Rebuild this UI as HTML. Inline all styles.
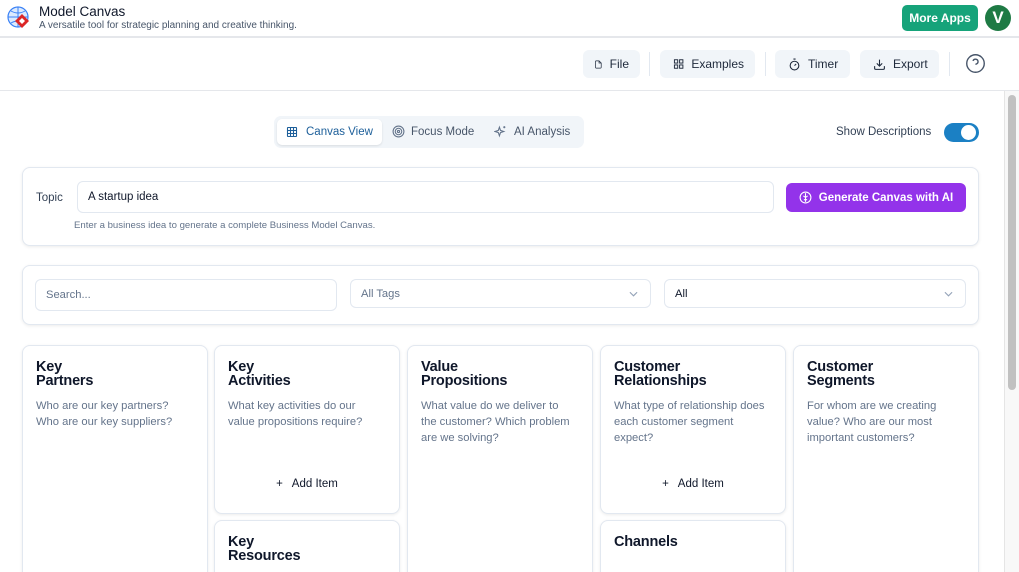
<!DOCTYPE html>
<html style="width:1019px;height:572px;overflow:hidden"><head><meta charset="utf-8"><style>
*{box-sizing:border-box;margin:0;padding:0}
body{width:1019px;height:572px;overflow:hidden;background:#fff;font-family:"Liberation Sans",sans-serif;color:#1e293b;position:relative}
.abs{position:absolute}
.hdr{left:0;top:0;width:1019px;height:38px;border-bottom:2px solid #e5e7eb;background:#fff}
.tb{left:0;top:39px;width:1019px;height:52px;border-bottom:1px solid #e5e7eb}
.btn{position:absolute;top:50px;height:28px;background:#f1f5f9;border-radius:6px;font-size:12px;color:#1e293b;display:flex;align-items:center;gap:7px;padding:0 11px}
.sep{position:absolute;top:52px;width:1px;height:24px;background:#e2e8f0}
.box{position:absolute;border:1px solid #e2e8f0;border-radius:8px;box-shadow:0 1px 3px rgba(0,0,0,.08);background:#fff}
.inp{position:absolute;border:1px solid #e2e8f0;border-radius:6px;background:#fff;font-size:12px;display:flex;align-items:center;padding-left:10px}
.card{position:absolute;width:186px;border:1px solid #e2e8f0;border-radius:8px;box-shadow:0 1px 3px rgba(0,0,0,.08);background:#fff;padding:14px 13px}
.card h3{font-size:14.5px;font-weight:700;line-height:14px;color:#0f172a;letter-spacing:-.2px}
.card p{font-size:11.2px;line-height:16px;color:#64748b;margin-top:10px;padding-right:6px}
.add{position:absolute;left:0;right:0;font-size:11.5px;color:#0f172a;text-align:center}
.t{position:absolute;font-size:11.5px;line-height:14px}
</style></head><body>
<div class="abs hdr"></div>
<svg class="abs" style="left:7px;top:6px" width="24" height="24" viewBox="0 0 24 24"><circle cx="11" cy="11" r="10" fill="#dbeafe" stroke="#3b82f6" stroke-width="1.2"/><path d="M1 11h20M11 1v20M4 5q7 4 14 0M4 17q7-4 14 0" stroke="#3b82f6" stroke-width="1" fill="none"/><path d="M15 8l7 7-7 7-7-7z" fill="#dc2626"/><path d="M15 12l3 3-3 3-3-3z" fill="#fff"/></svg>
<div class="abs" style="left:39px;top:4px;font-size:13.5px;color:#0f172a">Model Canvas</div>
<div class="abs" style="left:39px;top:20px;font-size:10px;color:#475569">A versatile tool for strategic planning and creative thinking.</div>
<div class="abs" style="left:902px;top:5px;width:76px;height:26px;background:#16a37a;border-radius:5px;color:#fff;font-size:12px;font-weight:700;display:flex;align-items:center;justify-content:center">More Apps</div>
<div class="abs" style="left:985px;top:5px;width:26px;height:26px;border-radius:50%;background:#1e7a44;color:#fff;font-weight:700;font-size:17px;display:flex;align-items:center;justify-content:center">V</div>
<div class="abs tb"></div>
<div class="btn" style="left:583px;width:57px"><svg width="13" height="13" viewBox="0 0 24 24" fill="none" stroke="#1e293b" stroke-width="2"><path d="M14 2H6a2 2 0 0 0-2 2v16a2 2 0 0 0 2 2h12a2 2 0 0 0 2-2V8z"/><path d="M14 2v6h6"/></svg>File</div>
<div class="sep" style="left:649px"></div>
<div class="btn" style="left:660px;width:95px;padding-left:13px"><svg width="12" height="12" viewBox="0 0 24 24" fill="none" stroke="#1e293b" stroke-width="2"><rect x="3" y="3" width="7" height="7"/><rect x="14" y="3" width="7" height="7"/><rect x="3" y="14" width="7" height="7"/><rect x="14" y="14" width="7" height="7"/></svg>Examples</div>
<div class="sep" style="left:765px"></div>
<div class="btn" style="left:775px;width:75px;padding-left:13px"><svg width="13" height="13" viewBox="0 0 24 24" fill="none" stroke="#1e293b" stroke-width="2"><circle cx="12" cy="14" r="8"/><path d="M10 2h4M12 14l3-3"/></svg>Timer</div>
<div class="btn" style="left:860px;width:79px;padding-left:13px"><svg width="13" height="13" viewBox="0 0 24 24" fill="none" stroke="#1e293b" stroke-width="2"><path d="M21 15v4a2 2 0 0 1-2 2H5a2 2 0 0 1-2-2v-4M7 10l5 5 5-5M12 15V3"/></svg>Export</div>
<div class="sep" style="left:949px"></div>
<svg class="abs" style="left:965px;top:53px" width="21" height="21" viewBox="0 0 24 24" fill="none" stroke="#475569" stroke-width="1.6"><circle cx="12" cy="12" r="10"/><path d="M9.1 9a3 3 0 0 1 5.8 1c0 2-3 3-3 3M12 17h.01"/></svg>
<div class="abs" style="left:1004px;top:91px;width:15px;height:481px;background:#f8f8f8;border-left:1px solid #e5e5e5"></div>
<div class="abs" style="left:1008px;top:95px;width:8px;height:295px;background:#c1c1c1;border-radius:4px"></div>
<div class="abs" style="left:274px;top:116px;width:310px;height:32px;background:#f1f5f9;border-radius:7px"></div>
<div class="abs" style="left:277px;top:119px;width:105px;height:26px;background:#fff;border-radius:5px;box-shadow:0 1px 2px rgba(0,0,0,.1)"></div>
<svg class="abs" style="left:286px;top:126px" width="12" height="12" viewBox="0 0 24 24" fill="none" stroke="#1d5f9a" stroke-width="2.2"><rect x="3" y="3" width="18" height="18" rx="1"/><path d="M3 9h18M3 15h18M9 3v18M15 3v18"/></svg>
<div class="t" style="left:306px;top:125px;color:#1d5f9a">Canvas View</div>
<svg class="abs" style="left:392px;top:125px" width="13" height="13" viewBox="0 0 24 24" fill="none" stroke="#64748b" stroke-width="2"><circle cx="12" cy="12" r="10"/><circle cx="12" cy="12" r="6"/><circle cx="12" cy="12" r="2"/></svg>
<div class="t" style="left:411px;top:125px;color:#475569">Focus Mode</div>
<svg class="abs" style="left:494px;top:125px" width="13" height="13" viewBox="0 0 24 24" fill="none" stroke="#64748b" stroke-width="2"><path d="M10 4l2 6 6 2-6 2-2 6-2-6-6-2 6-2zM19 2v4M17 4h4"/></svg>
<div class="t" style="left:514px;top:125px;color:#475569">AI Analysis</div>
<div class="t" style="left:836px;top:125px;color:#334155">Show Descriptions</div>
<div class="abs" style="left:944px;top:123px;width:35px;height:19px;background:#1b80c4;border-radius:10px"></div>
<div class="abs" style="left:961px;top:125px;width:15px;height:15px;background:#fff;border-radius:50%"></div>
<div class="box" style="left:22px;top:167px;width:957px;height:79px"></div>
<div class="t" style="left:36px;top:191px;color:#334155">Topic</div>
<div class="inp" style="left:77px;top:181px;width:697px;height:32px;color:#0f172a;font-size:11.5px">A startup idea</div>
<div class="abs" style="left:74px;top:220px;font-size:9.6px;color:#64748b">Enter a business idea to generate a complete Business Model Canvas.</div>
<div class="abs" style="left:786px;top:183px;width:180px;height:29px;background:#9333ea;border-radius:6px;color:#fff;font-size:11.5px;font-weight:700;display:flex;align-items:center;justify-content:center;gap:7px"><svg width="13" height="13" viewBox="0 0 24 24" fill="none" stroke="#fff" stroke-width="2"><circle cx="12" cy="12" r="10"/><path d="M12 4v16M8 9l4 3 4-3M9 16h6"/></svg>Generate Canvas with AI</div>
<div class="box" style="left:22px;top:265px;width:957px;height:60px"></div>
<div class="inp" style="left:35px;top:279px;width:302px;height:32px;color:#64748b;font-size:11.2px">Search...</div>
<div class="inp" style="left:350px;top:279px;width:301px;height:29px;color:#64748b;font-size:11.2px">All Tags<svg style="position:absolute;right:12px;top:11px" width="9" height="6" viewBox="0 0 10 6" fill="none" stroke="#94a3b8" stroke-width="1.2"><path d="M1 1l4 4 4-4"/></svg></div>
<div class="inp" style="left:664px;top:279px;width:302px;height:29px;color:#0f172a;font-size:11.2px">All<svg style="position:absolute;right:12px;top:11px" width="9" height="6" viewBox="0 0 10 6" fill="none" stroke="#94a3b8" stroke-width="1.2"><path d="M1 1l4 4 4-4"/></svg></div>
<div class="card" style="left:22px;top:345px;height:240px"><h3>Key<br>Partners</h3><p>Who are our key partners? Who are our key suppliers?</p></div>
<div class="card" style="left:214px;top:345px;height:169px"><h3>Key<br>Activities</h3><p style="padding-right:18px">What key activities do our value propositions require?</p><div class="add" style="top:132px">+&nbsp;&nbsp; Add Item</div></div>
<div class="card" style="left:214px;top:520px;height:80px"><h3>Key<br>Resources</h3></div>
<div class="card" style="left:407px;top:345px;height:240px"><h3>Value<br>Propositions</h3><p>What value do we deliver to the customer? Which problem are we solving?</p></div>
<div class="card" style="left:600px;top:345px;height:169px"><h3>Customer<br>Relationships</h3><p>What type of relationship does each customer segment expect?</p><div class="add" style="top:132px">+&nbsp;&nbsp; Add Item</div></div>
<div class="card" style="left:600px;top:520px;height:80px"><h3>Channels</h3></div>
<div class="card" style="left:793px;top:345px;height:240px"><h3>Customer<br>Segments</h3><p>For whom are we creating value? Who are our most important customers?</p></div>
</body></html>
